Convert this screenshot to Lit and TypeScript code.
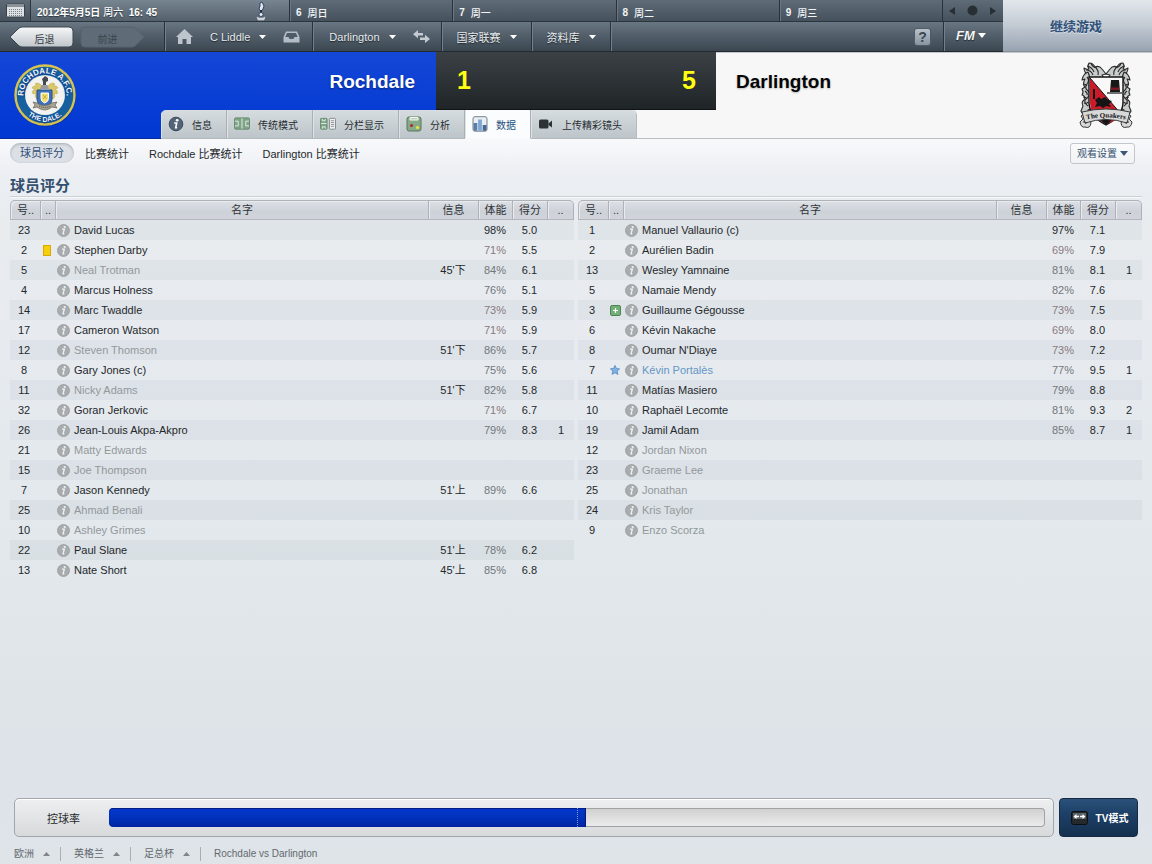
import { LitElement, html, svg, css, nothing } from "lit";
import { customElement, property } from "lit/decorators.js";
import { classMap } from "lit/directives/class-map.js";

interface Player {
  no: number;
  name: string;
  cond?: number;
  rating?: string;
  goals?: number;
  info?: string;
  mark?: "card" | "injury" | "star";
  state?: "off" | "best";
}

const HOME: Player[] = [
  { no: 23, name: "David Lucas", cond: 98, rating: "5.0" },
  { no: 2, name: "Stephen Darby", cond: 71, rating: "5.5", mark: "card" },
  { no: 5, name: "Neal Trotman", cond: 84, rating: "6.1", info: "45'下", state: "off" },
  { no: 4, name: "Marcus Holness", cond: 76, rating: "5.1" },
  { no: 14, name: "Marc Twaddle", cond: 73, rating: "5.9" },
  { no: 17, name: "Cameron Watson", cond: 71, rating: "5.9" },
  { no: 12, name: "Steven Thomson", cond: 86, rating: "5.7", info: "51'下", state: "off" },
  { no: 8, name: "Gary Jones (c)", cond: 75, rating: "5.6" },
  { no: 11, name: "Nicky Adams", cond: 82, rating: "5.8", info: "51'下", state: "off" },
  { no: 32, name: "Goran Jerkovic", cond: 71, rating: "6.7" },
  { no: 26, name: "Jean-Louis Akpa-Akpro", cond: 79, rating: "8.3", goals: 1 },
  { no: 21, name: "Matty Edwards", state: "off" },
  { no: 15, name: "Joe Thompson", state: "off" },
  { no: 7, name: "Jason Kennedy", cond: 89, rating: "6.6", info: "51'上" },
  { no: 25, name: "Ahmad Benali", state: "off" },
  { no: 10, name: "Ashley Grimes", state: "off" },
  { no: 22, name: "Paul Slane", cond: 78, rating: "6.2", info: "51'上" },
  { no: 13, name: "Nate Short", cond: 85, rating: "6.8", info: "45'上" },
];

const AWAY: Player[] = [
  { no: 1, name: "Manuel Vallaurio (c)", cond: 97, rating: "7.1" },
  { no: 2, name: "Aurélien Badin", cond: 69, rating: "7.9" },
  { no: 13, name: "Wesley Yamnaine", cond: 81, rating: "8.1", goals: 1 },
  { no: 5, name: "Namaie Mendy", cond: 82, rating: "7.6" },
  { no: 3, name: "Guillaume Gégousse", cond: 73, rating: "7.5", mark: "injury" },
  { no: 6, name: "Kévin Nakache", cond: 69, rating: "8.0" },
  { no: 8, name: "Oumar N'Diaye", cond: 73, rating: "7.2" },
  { no: 7, name: "Kévin Portalès", cond: 77, rating: "9.5", goals: 1, mark: "star", state: "best" },
  { no: 11, name: "Matías Masiero", cond: 79, rating: "8.8" },
  { no: 10, name: "Raphaël Lecomte", cond: 81, rating: "9.3", goals: 2 },
  { no: 19, name: "Jamil Adam", cond: 85, rating: "8.7", goals: 1 },
  { no: 12, name: "Jordan Nixon", state: "off" },
  { no: 23, name: "Graeme Lee", state: "off" },
  { no: 25, name: "Jonathan", state: "off" },
  { no: 24, name: "Kris Taylor", state: "off" },
  { no: 9, name: "Enzo Scorza", state: "off" },
];

const reset = css`
  * { box-sizing: border-box; }
  button, select {
    font: inherit; color: inherit; background: none; border: 0; padding: 0; margin: 0;
    cursor: pointer; text-shadow: inherit;
  }
  a { color: inherit; text-decoration: none; }
  svg { display: block; flex: none; }
`;

const caret = (cls = "caret") =>
  html`<svg class=${cls} width="7" height="4" viewBox="0 0 7 4" aria-hidden="true"><path d="M0 0h7L3.5 4z" fill="currentColor"/></svg>`;

/* ---------- player table ---------- */

@customElement("rating-table")
class RatingTable extends LitElement {
  @property({ attribute: false }) players: Player[] = [];
  @property() team = "";

  static styles = [reset, css`
    :host { display: block; flex: 1 1 0; min-width: 0; }
    table { width: 100%; border-collapse: separate; border-spacing: 0; table-layout: fixed; font-size: 11px; }
    th {
      height: 20px; line-height: 18px; padding: 0; font-weight: 400; color: #2f3438; text-align: center;
      background: linear-gradient(#dde1e6, #cdd1d8 60%, #d1d4db);
      border-top: 1px solid #aeb3b8; border-bottom: 1px solid #b3b7bd; border-right: 1px solid #aeb2b8;
      box-shadow: inset 1px 1px 0 #e8ebee;
    }
    th:first-child { border-left: 1px solid #b3b7bd; border-top-left-radius: 5px; }
    th:last-child { border-top-right-radius: 5px; }
    td { height: 20px; line-height: 20px; padding: 0; text-align: center; color: #24282b; white-space: nowrap; }
    tbody tr:nth-child(odd) td { background: rgba(110, 115, 130, 0.065); }
    .c-no { width: 31px; } .c-mark { width: 15px; } .c-info { width: 50px; }
    .c-cond { width: 34px; } .c-rate { width: 35px; } .c-goals { width: 26px; }
    .no { padding-right: 3px; }
    .cond { text-align: right; padding-right: 7px; color: #72777b; }
    .tired { color: #8a7a7d; }
    .fresh { color: #24282b; }
    .rate { padding-right: 2px; }
    .mark { padding-right: 3px; }
    .info { padding-right: 2px; }
    .who { display: flex; align-items: center; gap: 4px; padding-left: 1px; }
    .off { color: #93989b; }
    .best { color: #6496c4; }
    .icon { margin: 0 auto; }
  `];

  private mark(m?: string) {
    if (m === "card")
      return html`<svg class="icon" width="8" height="11" viewBox="0 0 8 11"><rect x=".5" y=".5" width="7" height="10" fill="#f5cf0c" stroke="#d8a900"/></svg>`;
    if (m === "injury")
      return html`<svg class="icon" width="11" height="11" viewBox="0 0 11 11"><rect x=".5" y=".5" width="10" height="10" rx="1.5" fill="#72b077" stroke="#4c8453"/><path d="M5.500 3v5M3 5.500h5" stroke="#fff" stroke-width="1.200"/></svg>`;
    if (m === "star")
      return html`<svg class="icon" width="10" height="10" viewBox="0 0 10 10"><path d="M5 .4l1.400 3 3.200.4-2.300 2.300.6 3.300L5 7.800 2.100 9.400l.6-3.300L.4 3.800l3.200-.4z" fill="#7db0e6" stroke="#4a7fb8" stroke-width=".7"/></svg>`;
    return nothing;
  }

  render() {
    return html`<table aria-label=${this.team}>
      <colgroup><col class="c-no"><col class="c-mark"><col><col class="c-info"><col class="c-cond"><col class="c-rate"><col class="c-goals"></colgroup>
      <thead><tr><th scope="col">号..</th><th scope="col">..</th><th scope="col">名字</th><th scope="col">信息</th><th scope="col">体能</th><th scope="col">得分</th><th scope="col">..</th></tr></thead>
      <tbody>${this.players.map((p) => html`<tr>
        <td class="no">${p.no}</td>
        <td class="mark">${this.mark(p.mark)}</td>
        <td><div class="who">
          <svg width="13" height="13" viewBox="0 0 13 13" aria-hidden="true"><circle cx="6.500" cy="6.500" r="6" fill="#a9acaf" stroke="#96999c" stroke-width=".8"/><ellipse cx="7.700" cy="3" rx="1.100" ry=".9" fill="#f0f2f4"/><path d="M5 5.100h2.300l-1.200 4.700h1.200" fill="none" stroke="#f0f2f4" stroke-width="1.300"/></svg>
          <a href="#" class=${classMap({ off: p.state === "off", best: p.state === "best" })}>${p.name}</a>
        </div></td>
        <td class="info">${p.info ?? ""}</td>
        <td class=${classMap({ cond: true, tired: (p.cond ?? 0) < 75, fresh: (p.cond ?? 0) > 95 })}>${p.cond ? p.cond + "%" : ""}</td>
        <td class="rate">${p.rating ?? ""}</td>
        <td>${p.goals ?? ""}</td>
      </tr>`)}</tbody>
    </table>`;
  }
}

/* ---------- club crests ---------- */

const rochdaleCrest = html`<svg class="crest-home" width="64" height="64" viewBox="0 0 64 64" role="img" aria-label="Rochdale">
  <defs>
    <path id="ringTop" d="M13.400 43A21.600 21.600 0 1 1 50.600 43"/>
    <path id="ringBottom" d="M5.500 32A26.500 26.500 0 0 0 58.500 32"/>
  </defs>
  <circle cx="32.500" cy="33" r="30.500" fill="#06206e" opacity=".5"/>
  <circle cx="32" cy="32" r="29.500" fill="#16609f" stroke="#d5c252" stroke-width="2.400"/>
  <circle cx="32" cy="32" r="20" fill="#f2f3f0"/>
  <g fill="#f4f8fc" font-family="Liberation Sans, sans-serif" font-weight="700">
    <text font-size="8"><textPath href="#ringTop" startOffset="50%" text-anchor="middle">ROCHDALE A.F.C.</textPath></text>
    <text font-size="7"><textPath href="#ringBottom" startOffset="50%" text-anchor="middle">THE DALE.</textPath></text>
  </g>
  <g fill="#dcc868" stroke="#b9a549" stroke-width=".5">
    <path d="M27 21q-3-2-5 0l2 2q-4-1-5 2l3 1q-4 2-2 5l3-1q-2 4 1 6l2-3 1-6 2-4z"/>
    <path d="M37 21q3-2 5 0l-2 2q4-1 5 2l-3 1q4 2 2 5l-3-1q2 4-1 6l-2-3-1-6-2-4z"/>
  </g>
  <path d="M29 16l3-3 3 2v3l-2 1v6h-3v-6z" fill="#45484c"/>
  <path d="M28.500 22h6l1.500 4h-9z" fill="#9a9c9b"/>
  <path d="M24 27h15v9q0 6-7.500 8.500Q24 42 24 36z" fill="#3c71b7" stroke="#244f8d"/>
  <path d="M28 30h7.500v5.500q0 3-3.800 4.500-3.700-1.500-3.700-4.500z" fill="#f1df76" stroke="#fff"/>
  <path d="M30 32l3.500 4M33.500 32L30 36" stroke="#c8ab35"/>
  <path d="M20 39l4 1q7 5 15 0l5-1-2 3 2 3-5-1q-7 6-15 0l-4 1 2-3z" fill="#a8a494" stroke="#6d695b" stroke-width=".8"/>
  <path d="M26 43q5.500 3 12 0" stroke="#47443b" stroke-dasharray="1 1" fill="none"/>
</svg>`;

const scroll = svg`<path d="M17 20q-5-1-6-6 3 2 4 1-5-2-5-7 3 2 5 1-2-3 0-6 4 0 6 4 4-2 7 2l4 5-4 1q3 4 0 6l-6 1z" transform="translate(-4)"/>
  <path d="M10 12q-5 2-6 8l3-1q-3 5 0 8l-3 2q2 3 0 6 4 1 2 5-3 2-1 6l-2 5q2 5 8 4l-1-5 4-2-3-5 3-4-3-4 3-5-3-4 2-5z"/>
  <path d="M9 17q3 3 0 7t1 7-1 7 1 8" fill="none"/><path d="M9 6q5 1 7 6M8 10q5 0 7 5M13 3q1 4 6 5M18 8q3 3 2 7M7 31q3 2 2 4M6 43q3 1 4-1M5 24q3 0 4 2M5 37q3 0 4 2" fill="none"/>`;

const darlingtonCrest = html`<svg class="crest-away" width="56" height="70" viewBox="0 0 56 70" role="img" aria-label="Darlington">
  <g fill="#c9cccc" stroke="#2a2a2a" stroke-width="1.100" stroke-linejoin="round">
    ${scroll}
    <g transform="matrix(-1 0 0 1 56 0)">${scroll}</g>
  </g>
  <path d="M11 17h34v25q0 14-17 23Q11 56 11 42z" fill="#f8f8f8" stroke="#151515" stroke-width="1.400"/>
  <path d="M12 18l32 37q-5 6-16 9Q12 56 12 42z" fill="#c91c2a"/>
  <path d="M12 18l31 36" stroke="#151515"/>
  <path d="M29 33h15" stroke="#151515" stroke-width="1.200"/>
  <path d="M32 32l1-12h8l1 12z" fill="#181818"/><path d="M33 27.500h8v2.500h-8z" fill="#7d1821"/>
  <path d="M15 29h2v10h-2zM17 40l4-3 2 2 4-2 3 3 4 1-3 3 2 3-5-1-3 2-3-2-5 1 2-4z" fill="#141414"/>
  <path d="M20 58h16l-8 7z" fill="#141414"/>
  <g fill="#d7d8d8" stroke="#3a3a3a">
    <path d="M9 52l-6 4 2 3-3 3q1 6 5 5 5 2 6-4l-2-5z"/>
    <path d="M47 52l6 4-2 3 3 3q-1 6-5 5-5 2-6-4l2-5z"/>
    <path d="M4 52q24-6 48 0l-3 11q-21-7-42 0z"/>
    <path d="M5 62q3-1 3 2M51 62q-3-1-3 2" fill="none"/>
  </g>
  <path id="motto" d="M4 60.500q24-6 48 0" fill="none"/>
  <text font-family="Liberation Serif, serif" font-weight="700" font-size="7" fill="#111"><textPath href="#motto" startOffset="50%" text-anchor="middle">The Quakers</textPath></text>
</svg>`;

/* ---------- tab glyphs ---------- */

const icons = {
  info: html`<svg width="16" height="16" viewBox="0 0 16 16"><circle cx="8" cy="8" r="6.800" fill="#536478" stroke="#3a4857"/><ellipse cx="9.200" cy="4.200" rx="1.400" ry="1.200" fill="#fff"/><path d="M6.200 7h2.500l-1 4.700h1.500" fill="none" stroke="#fff" stroke-width="1.600"/></svg>`,
  pitch: html`<svg width="17" height="14" viewBox="0 0 17 14"><rect x=".5" y=".5" width="16" height="12" rx="1.500" fill="#7fa388" stroke="#638a6d"/><path d="M8.500 1v11M1 4h3.500v5H1M16 4h-3.500v5H16" fill="none" stroke="#e3efe4"/></svg>`,
  split: html`<svg width="17" height="14" viewBox="0 0 17 14"><rect x=".5" y="1" width="7" height="11.500" rx="1" fill="#7fa388" stroke="#638a6d"/><path d="M1 6.500h6M2.500 1.500v2h3v-2M2.500 12v-2h3v2" fill="none" stroke="#e3efe4"/><rect x="10" y="1" width="6.500" height="11.500" rx="1" fill="#eff1f2" stroke="#7f8588"/><path d="M11.500 3.500h3.500M11.500 5.500h3.500M11.500 7.500h3.500M11.500 9.500h3.500" stroke="#8c9194"/></svg>`,
  analysis: html`<svg width="16" height="16" viewBox="0 0 16 16"><rect x="1" y="1" width="14" height="14" rx="2" fill="#86a98a" stroke="#56795b"/><path d="M4 1.500h8v2.500H4z" fill="#b9cfba" stroke="#f5f8f5"/><circle cx="5.500" cy="9.500" r="1.600" fill="#b32a2a"/><circle cx="11.500" cy="11.500" r="1.600" fill="#f3e23b"/></svg>`,
  stats: html`<svg width="16" height="16" viewBox="0 0 16 16"><rect x="1" y=".7" width="14" height="14.500" rx="2" fill="#e8eef3" stroke="#74808a"/><path d="M1.500 7h3.800v7.700H1.500z" fill="#5a7ea8"/><path d="M6.100 3.500h3.800v11.200H6.100z" fill="#7fa7d2"/><path d="M10.700 9h3.800v5.700h-3.800z" fill="#46678f"/></svg>`,
  camera: html`<svg width="16" height="14" viewBox="0 0 16 14"><rect x="1" y="2.500" width="9.500" height="9" rx="1.500" fill="#2c3236"/><path d="M10.500 6.500L14 3.500v7L10.500 8z" fill="#2c3236"/></svg>`,
};

const TABS: [string, unknown][] = [
  ["信息", icons.info],
  ["传统模式", icons.pitch],
  ["分栏显示", icons.split],
  ["分析", icons.analysis],
  ["数据", icons.stats],
  ["上传精彩镜头", icons.camera],
];

/* ---------- page ---------- */

@customElement("app-root")
class AppRoot extends LitElement {
  @property({ type: Number }) possession = 51;

  static styles = [reset, css`
    :host {
      display: flex; flex-direction: column; min-height: 100vh;
      font-family: "Liberation Sans", "Noto Sans CJK SC", sans-serif; font-size: 11px; color: #24282b;
      background: linear-gradient(#f8f9fb 139px, #ebeef2 175px, #e8ecef 230px, #e7ebf0 330px, #e1e7ea 600px, #dfe4e8 690px, #dee3ea 780px, #dee4e8);
    }

    .top { display: flex; height: 52px; color: #e9edf1; }
    .bars { flex: 1; min-width: 0; border-bottom: 1px solid #22292f; }
    .days { display: flex; height: 22px; background: linear-gradient(#5f6c78, #45525d); font-size: 10px; font-weight: 700; border-bottom: 1px solid #2c353c; }
    .cal { width: 31px; display: grid; place-items: center; border-right: 1px solid #2c353c; background: linear-gradient(#5f6c78, #45525d); }
    .day { flex: 1; display: flex; align-items: center; padding: 3px 6px 0; gap: 6px; border-left: 1px solid #2a333b; box-shadow: inset 1px 0 0 #6b7782; color: #f2f4f6; }
    .zh { font-weight: 500; }
    .today { width: 258px; display: flex; align-items: center; justify-content: space-between; padding: 1px 23px 0 6px; background: linear-gradient(#778591, #54616d); color: #fff; text-shadow: 0 1px 1px #2e3840; white-space: pre; }
    .pager { width: 61px; display: flex; align-items: center; justify-content: space-between; padding: 0 7px 0 6px; border-left: 1px solid #2a333b; color: #272e34; }

    .nav { display: flex; height: 29px; background: linear-gradient(#697784, #55626d 40%, #3b4650); text-shadow: 0 1px 1px #1f272d; }
    .history { width: 164px; display: flex; align-items: center; gap: 6px; padding-left: 9px; font-size: 10px; text-shadow: none; }
    .back, .fwd { display: grid; align-items: center; width: 65px; height: 22px; }
    .back > *, .fwd > * { grid-area: 1 / 1; }
    .back { color: #30373d; } .fwd { color: #3a444d; }
    .back span { padding: 3px 0 0 6px; } .fwd span { padding: 3px 10px 0 0; }
    .menu { display: flex; align-items: center; gap: 17px; padding: 0 12px 0 11px; border-left: 1px solid #29323a; box-shadow: inset 1px 0 0 #71808c; }
    .menu.wide { padding: 0 14px 0 15px; }
    .menu.club { padding-left: 16px; padding-right: 11px; }
    .drop { display: flex; align-items: center; gap: 9px; height: 29px; color: #e6eaee; white-space: nowrap; }
    .caret { color: #fff; }
    .space { flex: 1; border-left: 1px solid #29323a; box-shadow: inset 1px 0 0 #71808c; display: flex; align-items: center; justify-content: flex-end; padding-right: 13px; }
    .help { width: 15px; height: 16px; border-radius: 2px; background: linear-gradient(#b9c2cb, #8794a1); color: #3b4752; font-size: 14px; font-weight: 700; line-height: 16px; text-align: center; text-shadow: none; box-shadow: 0 0 0 1px #4f5c67; }
    .fm { width: 60px; border-left: 1px solid #29323a; box-shadow: inset 1px 0 0 #71808c; display: flex; align-items: center; justify-content: center; gap: 3px; padding: 0 5px 2px 0; font-size: 13px; font-weight: 700; font-style: italic; color: #f3f5f7; }
    .continue { width: 149px; background: linear-gradient(#e2e7eb, #c2cad3 50%, #98a3b2); color: #2f5079; font-size: 13px; font-weight: 700; padding-right: 3px; border-bottom: 1px solid #85909c; text-shadow: 0 1px 0 #dfe4e9; }

    .score { display: grid; grid-template: 58px 29px / 1fr 280px 1fr; }
    .home { grid-area: 1 / 1 / 3 / 2; background: linear-gradient(#1547d6, #0239d3 90%); border-bottom: 1px solid #0a2a9c; color: #fff; padding: 0 21px 29px 13px; text-shadow: 0 1px 2px #0a2477; display: flex; justify-content: space-between; }
    .away { grid-area: 1 / 2 / 3 / 4; background: #f7f7f7; border-bottom: 1px solid #bbbdc0; border-top: 1px solid #c3c8cd; }
    .rival { grid-area: 1 / 3 / 3 / 4; display: flex; justify-content: space-between; padding: 0 18px 29px 20px; color: #050505; text-shadow: 0 1px 2px #bbb; }
    .club-name { margin: 0; font-size: 19px; font-weight: 700; line-height: 60px; }
    .crest-home { margin-top: 11px; } .crest-away { margin-top: 8px; text-shadow: none; }
    .result { grid-area: 1 / 2; display: flex; justify-content: space-between; padding: 0 20px 0 21px; background: linear-gradient(#3b4145, #1f2427); color: #ffff10; font-size: 25px; font-weight: 700; line-height: 57px; border-bottom: 1px solid #101416; }
    .tabs { grid-area: 2 / 1 / 3 / 4; z-index: 1; display: flex; margin-left: 161px; justify-self: start; border-radius: 5px 5px 0 0; overflow: hidden; border-right: 1px solid #b5babd; }
    .tab { display: flex; align-items: center; gap: 8px; padding: 0 14px 0 7px; border-right: 1px solid #aab1b5; box-shadow: inset 1px 0 0 #dde2e4; border-bottom: 1px solid #b3b9bd; background: linear-gradient(#d6dcdf, #bdc5ca); font-size: 10px; color: #272c30; white-space: nowrap; }
    .tab:last-child { border-right: 0; }
    .tab.on { background: #fbfcfd; border-bottom-color: #f8f9fb; color: #27517f; }
    .tab svg { width: 16px; }

    .sub { display: flex; align-items: center; justify-content: space-between; padding: 1px 17px 0 10px; height: 27px; }
    .links { display: flex; align-items: center; gap: 20px; white-space: nowrap; }
    .pill { margin-right: -9px; padding: 0 10px; height: 20px; line-height: 20px; border-radius: 10px; background: #dce0e6; box-shadow: inset 0 1px 3px #a5abb3; color: #2e4d76; }
    .view { display: grid; align-items: center; border: 1px solid #c3c7cc; border-radius: 3px; background: linear-gradient(#fafbfc, #f0f2f5); color: #34506e; font-size: 10px; }
    .view > * { grid-area: 1 / 1; }
    .view select { appearance: none; height: 19px; padding: 0 17px 0 6px; }
    .view svg { justify-self: end; margin-right: 6px; pointer-events: none; }

    .title { margin: 10px 10px 3px; font-size: 15px; line-height: 20px; font-weight: 700; color: #34506e; border-bottom: 1px solid #ccd1d5; box-shadow: 0 1px 0 #f6f8f9; }
    .teams { display: flex; gap: 4px; align-items: flex-start; padding: 0 10px; flex: 1; }

    .bottom { display: flex; gap: 5px; padding: 0 14px; margin-top: 20px; }
    .panel { flex: 1; display: flex; align-items: center; height: 39px; padding-right: 8px; border: 1px solid #a2a6aa; border-radius: 5px; background: linear-gradient(#eeeff0, #d8d9da); box-shadow: inset 0 1px 0 #fff; }
    .panel-label { width: 94px; padding-left: 32px; color: #24282b; }
    .meter { flex: 1; position: relative; height: 19px; border-radius: 4px; overflow: hidden; background: linear-gradient(#cfcfcf, #ededed); box-shadow: inset 0 0 0 1px #a0a3a6; }
    .fill { height: 100%; background: linear-gradient(#0439cc, #0030b8 60%, #0024a0); box-shadow: inset 0 1px 1px #001b80; border-right: 1px solid #0a1c70; border-radius: 4px 0 0 4px; }
    .half { position: absolute; top: 0; bottom: 0; left: 50%; border-left: 1px dotted #7c9bf0; }
    .tv { width: 79px; border-radius: 4px; display: flex; align-items: center; justify-content: center; gap: 8px; padding-left: 2px; background: linear-gradient(#2a517a, #1d4067 40%, #15304f); border: 1px solid #152b44; color: #fff; font-size: 10px; font-weight: 700; }
    .crumbs { display: flex; align-items: center; padding: 10px 14px 3px; font-size: 10px; line-height: 14px; color: #63696e; }
    .crumb { display: flex; align-items: center; gap: 9px; padding-right: 10px; margin-right: 13px; border-right: 1px solid #a9aeb3; line-height: 14px; }
    .up { transform: rotate(180deg); color: #808589; }
  `];

  render() {
    return html`
      <header class="top">
        <div class="bars">
          <div class="days">
            <button class="cal" aria-label="日历"><svg width="19" height="15" viewBox="0 0 19 15"><rect x=".5" y="1" width="18" height="13" rx="1" fill="#dfe2e4" stroke="#394249"/><path d="M1 3h17" stroke="#8a939a" stroke-width="2"/><path d="M3 6.500h13M3 8.500h13M3 10.500h13M3 12.500h13" stroke="#7a838a" stroke-dasharray="1 1"/></svg></button>
            <div class="today"><span>2012年5月5日 <span class="zh">周六</span>  16: 45</span>
              <svg width="10" height="20" viewBox="0 0 10 20" aria-hidden="true"><path d="M4 2l2-1 1 2 1 2-1 3-2 2-2-2 1-3z" fill="#dfe3ea" stroke="#1c2b52" stroke-width=".8"/><path d="M5 9v3" stroke="#1c2b52" stroke-width="2"/><circle cx="5" cy="13.500" r="2" fill="#e9ecf2" stroke="#1c2b52" stroke-width=".7"/><path d="M1 16l2 1h4l2-1-1 3H2z" fill="#c7cdd6" stroke="#dfe3ea" stroke-width=".5"/></svg></div>
            ${[["6", "周日"], ["7", "周一"], ["8", "周二"], ["9", "周三"]].map(([d, w]) => html`<div class="day"><span>${d}</span><span class="zh">${w}</span></div>`)}
            <div class="pager">
              <svg width="6" height="8" viewBox="0 0 6 8"><path d="M6 0v8L0 4z" fill="currentColor"/></svg>
              <svg width="11" height="11" viewBox="0 0 11 11"><circle cx="5.500" cy="5.500" r="5" fill="currentColor"/></svg>
              <svg width="6" height="8" viewBox="0 0 6 8"><path d="M0 0v8l6-4z" fill="currentColor"/></svg>
            </div>
          </div>
          <nav class="nav">
            <div class="history">
              <button class="back"><svg width="65" height="22" viewBox="0 0 65 22"><defs><linearGradient id="bk" x2="0" y2="1"><stop stop-color="#f6f7f8"/><stop offset="1" stop-color="#c0c5cb"/></linearGradient></defs><path d="M1 11L9 3q2-2 4-2h47q4 0 4 4v12q0 4-4 4H13q-2 0-4-2z" fill="url(#bk)" stroke="#3c464e"/></svg><span>后退</span></button>
              <button class="fwd" disabled><svg width="65" height="22" viewBox="0 0 65 22"><path d="M64 11l-8-8q-2-2-4-2H5Q1 1 1 5v12q0 4 4 4h47q2 0 4-2z" fill="#5f6c77" stroke="#56626c"/></svg><span>前进</span></button>
            </div>
            <div class="menu">
              <button aria-label="主页"><svg width="17" height="15" viewBox="0 0 17 15"><path d="M8.500 0L17 8h-2v7h-4.500v-5h-4v5H2V8H0z" fill="#bcc4cc"/></svg></button>
              <button class="drop">C Liddle ${caret()}</button>
              <button aria-label="收件箱"><svg width="17" height="12" viewBox="0 0 17 12"><path d="M3 .5h11l2.500 5.500v5.500H.5V6z" fill="#b4bdc5"/><path d="M4 2h9l1.700 4H11.500q-.5 2-1.500 2H7q-1 0-1.500-2H2.300z" fill="#4f5c67"/></svg></button>
            </div>
            <div class="menu club">
              <button class="drop">Darlington ${caret()}</button>
              <button aria-label="切换"><svg width="17" height="13" viewBox="0 0 17 13"><path d="M5 0v3h5v2.500H5v2.800L0 4.200z" fill="#c3cad1"/><path d="M12 4.700v2.800H7V10h5v3l5-4z" fill="#c3cad1"/></svg></button>
            </div>
            <div class="menu wide"><button class="drop">国家联赛 ${caret()}</button></div>
            <div class="menu wide"><button class="drop">资料库 ${caret()}</button></div>
            <div class="space"><button class="help">?</button></div>
            <button class="fm">FM <svg class="caret" width="8" height="5" viewBox="0 0 8 5"><path d="M0 0h8L4 5z" fill="currentColor"/></svg></button>
          </nav>
        </div>
        <button class="continue">继续游戏</button>
      </header>

      <section class="score">
        <div class="home">${rochdaleCrest}<h1 class="club-name">Rochdale</h1></div>
        <div class="away"></div>
        <div class="rival"><h1 class="club-name">Darlington</h1>${darlingtonCrest}</div>
        <div class="result"><span>1</span><span>5</span></div>
        <div class="tabs" role="tablist">
          ${TABS.map(([label, icon]) => html`<button role="tab" class=${classMap({ tab: true, on: label === "数据" })} aria-selected=${label === "数据"}>${icon}<span>${label}</span></button>`)}
        </div>
      </section>

      <nav class="sub">
        <div class="links">
          <a href="#" class="pill">球员评分</a><a href="#">比赛统计</a><a href="#">Rochdale 比赛统计</a><a href="#">Darlington 比赛统计</a>
        </div>
        <label class="view"><select aria-label="观看设置"><option>观看设置</option></select><svg width="8" height="5" viewBox="0 0 8 5"><path d="M0 0h8L4 5z" fill="#3d5873"/></svg></label>
      </nav>

      <h2 class="title">球员评分</h2>
      <main class="teams">
        <rating-table .players=${HOME} team="Rochdale"></rating-table>
        <rating-table .players=${AWAY} team="Darlington"></rating-table>
      </main>

      <section class="bottom">
        <div class="panel">
          <span class="panel-label">控球率</span>
          <div class="meter" role="meter" aria-label="控球率" aria-valuenow=${this.possession}>
            <div class="fill" style="width:${this.possession}%"></div><div class="half"></div>
          </div>
        </div>
        <button class="tv"><svg width="17" height="14" viewBox="0 0 17 14"><rect x=".5" y=".5" width="16" height="13" rx="2" fill="#26292c" stroke="#0d1013"/><path d="M2 2h13v6H2z" fill="#596066"/><path d="M2.500 5.500L5.500 3v1.800H8v1.500H5.500V8zM14.500 5.500l-3-2.500v1.800H9v1.500h2.500V8z" fill="#fff"/></svg><span>TV模式</span></button>
      </section>
      <footer class="crumbs">
        ${["欧洲", "英格兰", "足总杯"].map((c) => html`<button class="crumb">${c}${caret("up")}</button>`)}
        <a href="#">Rochdale vs Darlington</a>
      </footer>
    `;
  }
}
